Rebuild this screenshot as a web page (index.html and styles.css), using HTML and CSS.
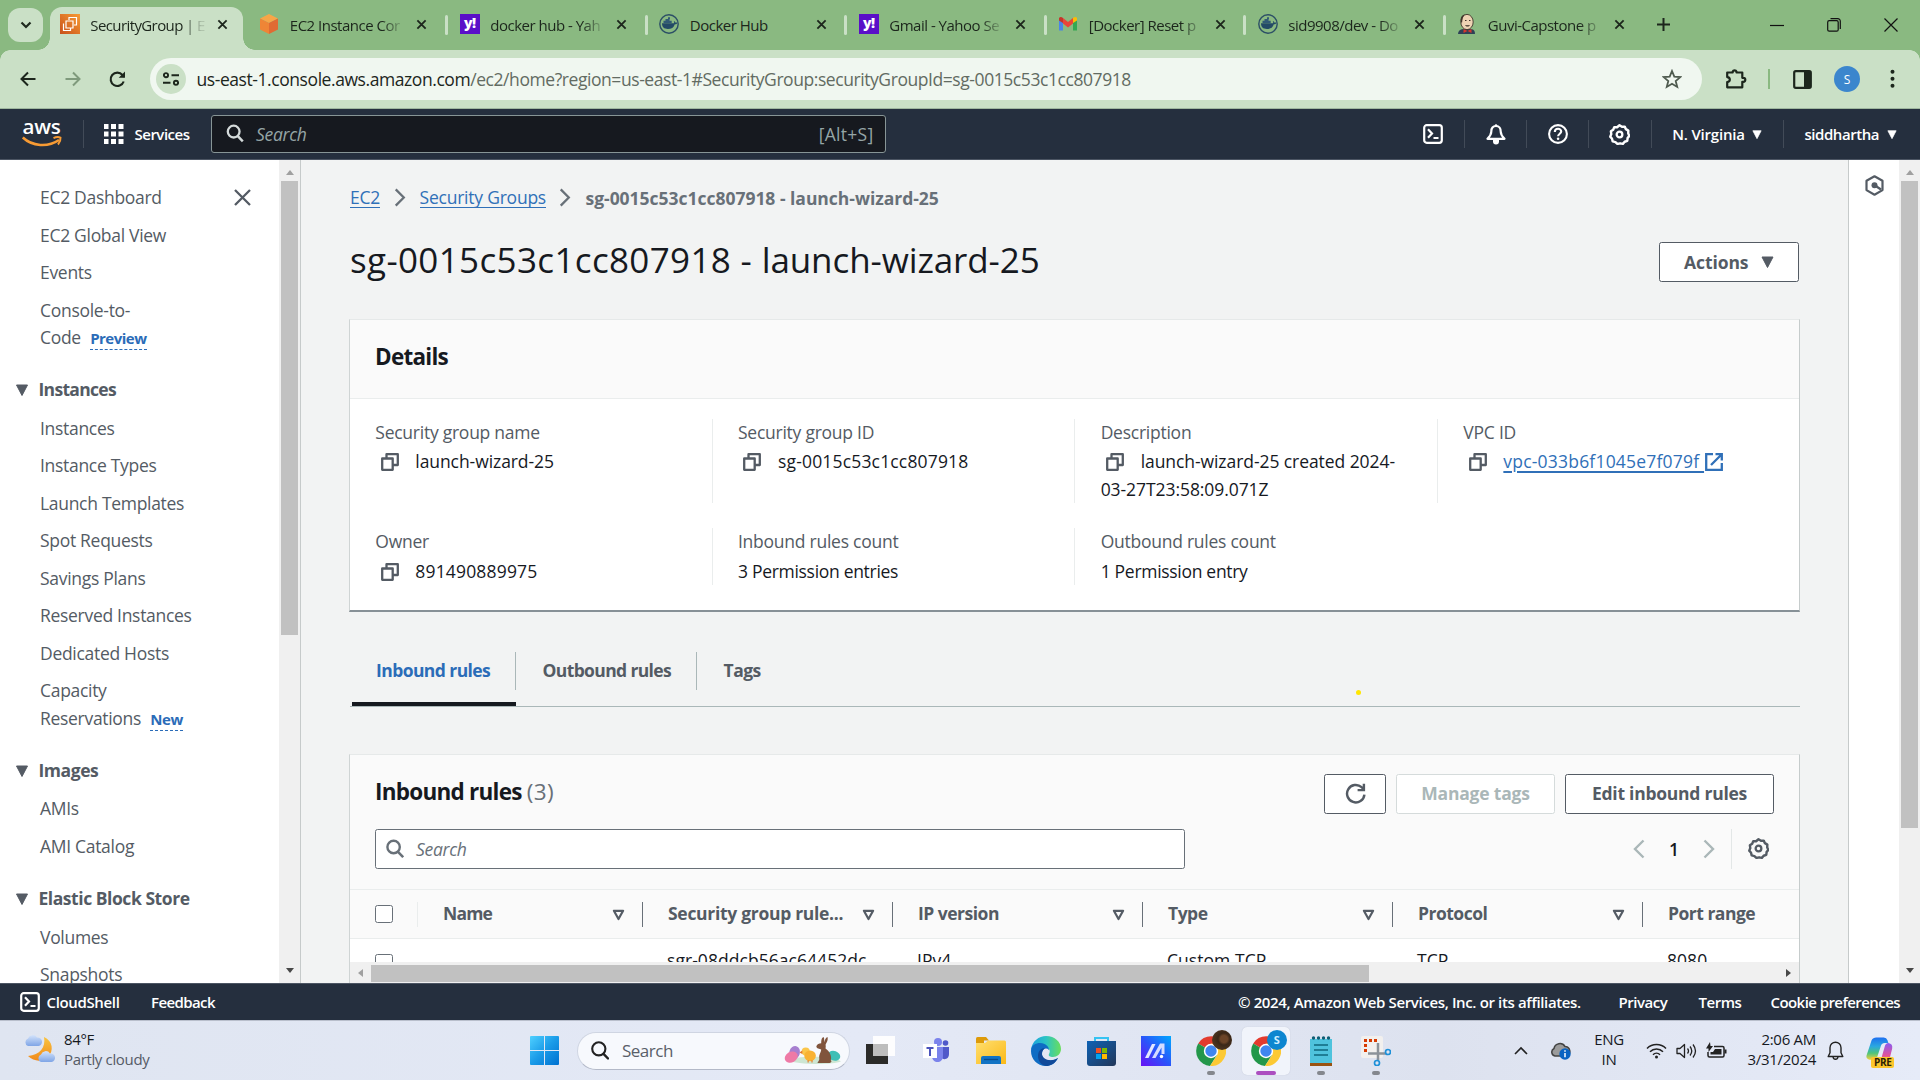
FILE: index.html
```html
<!DOCTYPE html>
<html lang="en">
<head>
<meta charset="utf-8">
<title>SecurityGroup | EC2</title>
<link rel="stylesheet" href="styles.css">
</head>
<body>
<svg class="defs" width="0" height="0">
  <defs>
    <linearGradient id="g-orange" x1="0" y1="1" x2="1" y2="0"><stop offset="0" stop-color="#c8511b"/><stop offset="1" stop-color="#f79b34"/></linearGradient>
    <linearGradient id="g-win" x1="0" y1="0" x2="1" y2="1"><stop offset="0" stop-color="#4fd0ff"/><stop offset=".5" stop-color="#1a9be8"/><stop offset="1" stop-color="#0071d0"/></linearGradient>
    <linearGradient id="g-moon" x1="0" y1="0" x2="0" y2="1"><stop offset="0" stop-color="#f9c440"/><stop offset="1" stop-color="#f08a1c"/></linearGradient>
    <linearGradient id="g-cloud" x1="0" y1="0" x2="0" y2="1"><stop offset="0" stop-color="#d3e3fb"/><stop offset="1" stop-color="#7fa5e6"/></linearGradient>
    <linearGradient id="g-edge" x1="0" y1="0" x2="1" y2="0"><stop offset="0" stop-color="#1aa0e0"/><stop offset=".5" stop-color="#2cc4c4"/><stop offset="1" stop-color="#6ade5c"/></linearGradient>
    <linearGradient id="g-folder" x1="0" y1="0" x2="1" y2="1"><stop offset="0" stop-color="#ffdf70"/><stop offset="1" stop-color="#fbb917"/></linearGradient>
    <linearGradient id="g-store" x1="0" y1="0" x2="1" y2="1"><stop offset="0" stop-color="#0e62b5"/><stop offset="1" stop-color="#233759"/></linearGradient>
    <linearGradient id="g-asus" x1="0" y1="1" x2="1" y2="0"><stop offset="0" stop-color="#6a10f5"/><stop offset=".5" stop-color="#2a55fa"/><stop offset="1" stop-color="#00a8ff"/></linearGradient>
    <linearGradient id="g-cop" x1="0" y1="0" x2="0" y2="1"><stop offset="0" stop-color="#1d6ff0"/><stop offset=".4" stop-color="#2aa8e0"/><stop offset=".7" stop-color="#4ec47a"/><stop offset="1" stop-color="#f5d23c"/></linearGradient>
    <linearGradient id="g-cop2" x1="0" y1="0" x2="0" y2="1"><stop offset="0" stop-color="#8a5cf0"/><stop offset=".6" stop-color="#e0529c"/><stop offset="1" stop-color="#f58a5a"/></linearGradient>
    <symbol id="x" viewBox="0 0 12 12"><path d="M1.5 1.5l9 9M10.5 1.5l-9 9" fill="none" stroke="currentColor" stroke-width="2"/></symbol>
    <symbol id="x-thin" viewBox="0 0 19 19"><path d="M2 2l15 15M17 2L2 17" fill="none" stroke="currentColor" stroke-width="2.300"/></symbol>
    <symbol id="caret" viewBox="0 0 12 12"><path d="M.5 1h11L6 11.5z" fill="currentColor" stroke="currentColor" stroke-linejoin="round"/></symbol>
    <symbol id="sort" viewBox="0 0 12 12"><path d="M1.4 1.8h9.2L6 10z" fill="none" stroke="currentColor" stroke-width="2.200" stroke-linejoin="round"/></symbol>
    <symbol id="mag" viewBox="0 0 18 20"><circle cx="7.6" cy="8" r="6.2" fill="none" stroke="currentColor" stroke-width="2.4"/><path d="M12 12.8l5.2 5.4" stroke="currentColor" stroke-width="2.6"/></symbol>
    <symbol id="copy" viewBox="0 0 18 18"><path d="M1.2 5.5h10.5v11.3H1.2zM5.5 5V1.2h11.3V12H12.5" fill="none" stroke="currentColor" stroke-width="2.3" stroke-linejoin="round"/></symbol>
    <symbol id="chev" viewBox="0 0 12 20"><path d="M1.5 1.5l8.5 8.5-8.5 8.5" fill="none" stroke="currentColor" stroke-width="2.4"/></symbol>
    <symbol id="gear" viewBox="0 0 20 20"><path d="M10 1.2l2.300 1.400 2.700-.1 1.100 2.400 2.300 1.400-.1 2.600 1 2.400-1.600 2.100-.3 2.600-2.500.9-1.700 2-2.600-.5-2.600.6-1.900-1.800-2.600-.6-.6-2.600L1.200 12l1-2.400-.4-2.600 2.200-1.500L5 3l2.700.1z" fill="none" stroke="currentColor" stroke-width="2.300" stroke-linejoin="round"/><circle cx="10" cy="10" r="2.700" fill="none" stroke="currentColor" stroke-width="2.200"/></symbol>
    <symbol id="shell" viewBox="0 0 20 20"><rect x="1.200" y="1.200" width="17.600" height="17.600" rx="2.500" fill="none" stroke="currentColor" stroke-width="2.200"/><path d="M5 5.200l4 4.300-4 4.300M10.500 14h5" fill="none" stroke="currentColor" stroke-width="2.200"/></symbol>
    <symbol id="whale" viewBox="0 0 20 20"><circle cx="10" cy="10" r="9.200" fill="none" stroke="#2c4f66" stroke-width="1.400"/><path d="M3 9.300h12c.3-1 .2-1.700-.2-2.400 1 .3 1.500 1 1.700 1.800.7-.2 1.400-.1 1.900.2-.5 1-1.400 1.400-2.600 1.300C14.700 13.500 12.500 15 8.900 15 5 15 3 13 3 9.300z" fill="#234a66"/><path d="M4.500 6.800h8.200v2.200H4.500zM6.500 4.900h4v2h-4zM9 3.200h2v2H9z" fill="#315a75"/></symbol>
    <symbol id="chrome" viewBox="0 0 30 30"><path d="M15 15L2.200 7.500A15 15 0 0 1 28 7.500z" fill="#e33b2e"/><path d="M15 15L2.200 7.500A15 15 0 0 0 14 30l7-11z" fill="#23974a"/><path d="M15 15l6.500 3.500L14 30A15 15 0 0 0 28 7.500H15z" fill="#fcc934"/><circle cx="15" cy="15" r="7.200" fill="#fff"/><circle cx="15" cy="15" r="5.700" fill="#3f86f0"/></symbol>
  </defs>
</svg>

<div class="screen">
  <header class="tabstrip">
    <div class="tab-search"><svg width="12" height="8" viewBox="0 0 12 8"><path d="M1.500 1.500L6 6l4.500-4.500" fill="none" stroke="#1f2a1f" stroke-width="2.200"/></svg></div>
    <div class="tab active">
      <svg class="fav" viewBox="0 0 20 20"><path d="M0 0h20v20H0z" fill="url(#g-orange)"/><path d="M3.500 9.500v7h7V14M6 7h7v7H6zM9 6V3.500h7.500V11H14" fill="none" stroke="#fff" stroke-width="1.200"/></svg>
      <span class="tab-title">SecurityGroup | E</span><svg class="close"><use href="#x"/></svg></div>
    <div class="tab">
      <svg class="fav" viewBox="0 0 20 20"><path d="M10 0l9 4.500L10 9 1 4.500z" fill="#f7a648"/><path d="M1 4.500L10 9v11l-9-4.500z" fill="#ef8536"/><path d="M19 4.500L10 9v11l9-4.500z" fill="#e06b33"/></svg>
      <span class="tab-title">EC2 Instance Cor</span><svg class="close"><use href="#x"/></svg></div>
    <div class="tab sep"><span class="fav yahoo">y!</span><span class="tab-title">docker hub - Yah</span><svg class="close"><use href="#x"/></svg></div>
    <div class="tab sep"><svg class="fav"><use href="#whale"/></svg><span class="tab-title whole">Docker Hub</span><svg class="close"><use href="#x"/></svg></div>
    <div class="tab sep"><span class="fav yahoo">y!</span><span class="tab-title">Gmail - Yahoo Se</span><svg class="close"><use href="#x"/></svg></div>
    <div class="tab sep">
      <svg class="fav" viewBox="0 0 20 20"><path d="M1 4v12.500h4V8z" fill="#4a86e8"/><path d="M19 4v12.500h-4V8z" fill="#34a853"/><path d="M1 4c1-1.500 2.500-1.500 4 0v5L1 6.500z" fill="#c5352b"/><path d="M5 4l5 4 5-4v5.500L10 13.500 5 9.500z" fill="#e9453a"/><path d="M19 4c-1-1.500-2.500-1.500-4 0v5l4-2.500z" fill="#fbbc05"/></svg>
      <span class="tab-title">[Docker] Reset p</span><svg class="close"><use href="#x"/></svg></div>
    <div class="tab sep"><svg class="fav"><use href="#whale"/></svg><span class="tab-title">sid9908/dev - Do</span><svg class="close"><use href="#x"/></svg></div>
    <div class="tab sep">
      <svg class="fav" viewBox="0 0 20 20"><path d="M1 20c0-3 2-4.500 5-5h8c3 .5 4 2 4 5z" fill="#2f4257"/><ellipse cx="10" cy="8" rx="6.200" ry="7.600" fill="#eed3b4" stroke="#41352b" stroke-width=".9"/><path d="M4 8c-1-4 .5-7 4-7.500C6 2 5.500 5 5 9z" fill="#41352b"/><path d="M8 6.500h1.500M12 6.500h1.500M8.500 11.500c1 .8 3 .8 4 0" stroke="#41352b" stroke-width="1"/><path d="M10.500 17l-4-2v4zM10.500 17l4-2v4z" fill="#d8362d"/></svg>
      <span class="tab-title">Guvi-Capstone p</span><svg class="close"><use href="#x"/></svg></div>
    <div class="new-tab"><svg width="13" height="13" viewBox="0 0 13 13"><path d="M6.500 0v13M0 6.500h13" stroke="#1c261c" stroke-width="2"/></svg></div>
    <div class="win-controls">
      <svg width="14" height="14" viewBox="0 0 14 14"><path d="M0 7.500h14" stroke="#111" stroke-width="1.200"/></svg>
      <svg width="14" height="14" viewBox="0 0 14 14"><path d="M3.500.7h7.300A2.500 2.500 0 0 1 13.300 3.200V11" fill="none" stroke="#111" stroke-width="1.200"/><rect x=".7" y="2.700" width="10.500" height="10.500" rx="1.500" fill="none" stroke="#111" stroke-width="1.200"/></svg>
      <svg width="14" height="14" viewBox="0 0 14 14"><path d="M.5.5l13 13M13.500.5l-13 13" stroke="#111" stroke-width="1.200"/></svg>
    </div>
  </header>

  <div class="toolbar">
    <div class="nav-btn"><svg width="16" height="16" viewBox="0 0 16 16"><path d="M15.500 8H1.800M8 1.500L1.500 8 8 14.500" fill="none" stroke="#1c261c" stroke-width="2"/></svg></div>
    <div class="nav-btn"><svg width="16" height="16" viewBox="0 0 16 16"><path d="M.5 8h13.700M8 1.500L14.500 8 8 14.500" fill="none" stroke="#7f9a7c" stroke-width="2"/></svg></div>
    <div class="nav-btn"><svg width="17" height="17" viewBox="0 0 17 17"><path d="M14.700 10.500A6.700 6.700 0 1 1 13.500 4l1.500 1.800" fill="none" stroke="#1c261c" stroke-width="2.100"/><path d="M16 .5v6.300H9.700z" fill="#1c261c"/></svg></div>
    <div class="omnibox">
      <div class="site-info"><svg width="16" height="14" viewBox="0 0 16 14"><path d="M8.500 3.200H16M0 10.800h7.500" stroke="#1c261c" stroke-width="2"/><circle cx="3" cy="3.200" r="2.100" fill="none" stroke="#1c261c" stroke-width="1.900"/><circle cx="13" cy="10.800" r="2.100" fill="none" stroke="#1c261c" stroke-width="1.900"/></svg></div>
      <span class="url">us-east-1.console.aws.amazon.com<span class="url-path">/ec2/home?region=us-east-1#SecurityGroup:securityGroupId=sg-0015c53c1cc807918</span></span>
      <svg class="star" width="20" height="20" viewBox="0 0 20 20"><path d="M10 2l2.300 5.600 6 .5-4.600 3.900 1.500 5.900L10 14.700l-5.200 3.200L6.300 12 1.700 8.100l6-.5z" fill="none" stroke="#4f5b4f" stroke-width="1.800"/></svg>
    </div>
    <div class="tool-icons">
      <svg width="22" height="24" viewBox="0 0 22 22"><path d="M2.200 4.500h5.500V3.700a2 2 0 0 1 3.800 0v.8h5.800v5.300h1a2 2 0 0 1 0 4h-1v5.500H2.200v-5.200c3.500-.3 3.500-4.700 0-5z" fill="none" stroke="#1c261c" stroke-width="2.200" stroke-linejoin="round"/></svg>
      <span class="tool-sep"></span>
      <svg width="19" height="19" viewBox="0 0 19 19"><rect x="1.200" y="1.200" width="16.600" height="16.600" rx="1.500" fill="none" stroke="#1c261c" stroke-width="2.200"/><path d="M11 1h7v17h-7z" fill="#1c261c"/></svg>
      <span class="avatar">S</span>
      <svg width="5" height="20" viewBox="0 0 5 20"><g fill="#1c261c"><circle cx="2.500" cy="2.700" r="2"/><circle cx="2.500" cy="9.700" r="2"/><circle cx="2.500" cy="16.700" r="2"/></g></svg>
    </div>
  </div>

  <div class="aws-nav">
    <svg class="aws-logo" width="40" height="28" viewBox="0 0 40 28"><text x="0.500" y="13.500" textLength="38" lengthAdjust="spacingAndGlyphs" class="aws-word">aws</text><path d="M.8 17.500C10 26.500 26 27.500 37 20" fill="none" stroke="#f79b34" stroke-width="2.600"/><path d="M31.500 18.200c3-1.500 5.500-1.200 7-.6.200 2-.6 4.700-2.500 6.900" fill="none" stroke="#f79b34" stroke-width="2"/></svg>
    <svg class="grid-ico" width="20" height="20" viewBox="0 0 20 20"><g fill="#fff"><path d="M0 0h5v5H0zM7.500 0h5v5h-5zM15 0h5v5h-5zM0 7.500h5v5H0zM7.500 7.500h5v5h-5zM15 7.500h5v5h-5zM0 15h5v5H0zM7.500 15h5v5h-5zM15 15h5v5h-5z"/></g></svg>
    <span class="services">Services</span>
    <div class="aws-search"><svg width="18" height="19"><use href="#mag"/></svg><span class="ph">Search</span><span class="kbd">[Alt+S]</span></div>
    <div class="aws-right">
      <div class="cell w62"><svg width="20" height="20"><use href="#shell"/></svg></div>
      <div class="cell w62"><svg width="20" height="21" viewBox="0 0 20 21"><path d="M10 2c-3.300 0-4.700 2.500-4.700 5.500 0 3.500-1.500 5-3.800 7.300h17c-2.300-2.300-3.800-3.800-3.800-7.300 0-3-1.400-5.500-4.700-5.500z" fill="none" stroke="#fff" stroke-width="2.200" stroke-linejoin="round"/><path d="M7 16v1.500a3 3 0 0 0 6 0V16z" fill="#fff"/><circle cx="10" cy="1.500" r="1.300" fill="#fff"/></svg></div>
      <div class="cell w62"><svg width="20" height="20" viewBox="0 0 20 20"><circle cx="10" cy="10" r="8.900" fill="none" stroke="#fff" stroke-width="2.100"/><path d="M6.800 8c0-4.200 6.400-4.200 6.400-.4 0 2.100-3.100 2.300-3.100 4.700" fill="none" stroke="#fff" stroke-width="2.100"/><circle cx="10.100" cy="14.800" r="1.300" fill="#fff"/></svg></div>
      <div class="cell w62"><svg width="21" height="21"><use href="#gear"/></svg></div>
      <div class="cell region"><span>N. Virginia</span><svg width="10" height="9"><use href="#caret"/></svg></div>
      <div class="cell user"><span>siddhartha</span><svg width="10" height="9"><use href="#caret"/></svg></div>
    </div>
  </div>

  <div class="main">
    <nav class="sidebar">
      <div class="side-list">
        <a class="item top">EC2 Dashboard<svg class="side-close"><use href="#x-thin"/></svg></a>
        <a class="item">EC2 Global View</a>
        <a class="item">Events</a>
        <a class="item">Console-to-<br>Code <span class="badge">Preview</span></a>
        <div class="group"><svg><use href="#caret"/></svg>Instances</div>
        <a class="item">Instances</a>
        <a class="item">Instance Types</a>
        <a class="item">Launch Templates</a>
        <a class="item">Spot Requests</a>
        <a class="item">Savings Plans</a>
        <a class="item">Reserved Instances</a>
        <a class="item">Dedicated Hosts</a>
        <a class="item">Capacity<br>Reservations <span class="badge">New</span></a>
        <div class="group"><svg><use href="#caret"/></svg>Images</div>
        <a class="item">AMIs</a>
        <a class="item">AMI Catalog</a>
        <div class="group"><svg><use href="#caret"/></svg>Elastic Block Store</div>
        <a class="item">Volumes</a>
        <a class="item">Snapshots</a>
      </div>
      <div class="vbar"><i class="up"></i><b class="thumb side-thumb"></b><i class="down"></i></div>
    </nav>

    <main class="content">
      <div class="crumbs"><a class="link">EC2</a><svg><use href="#chev"/></svg><a class="link">Security Groups</a><svg><use href="#chev"/></svg><span class="here">sg-0015c53c1cc807918 - launch-wizard-25</span></div>
      <div class="title-row"><h1>sg-0015c53c1cc807918 - <span>launch-wizard-25</span></h1><div class="btn actions">Actions<svg width="13" height="12"><use href="#caret"/></svg></div></div>

      <section class="card details">
        <h2 class="card-head">Details</h2>
        <div class="kv">
          <div><label>Security group name</label><p><svg class="copy"><use href="#copy"/></svg>launch-wizard-25</p></div>
          <div><label>Security group ID</label><p class="mono"><svg class="copy"><use href="#copy"/></svg>sg-0015c53c1cc807918</p></div>
          <div><label>Description</label><p><svg class="copy"><use href="#copy"/></svg>launch-wizard-25 created 2024-<br>03-27T23:58:09.071Z</p></div>
          <div><label>VPC ID</label><p class="vpc"><svg class="copy"><use href="#copy"/></svg><a>vpc-033b6f1045e7f079f </a><svg class="ext" viewBox="0 0 18 18"><path d="M8 1.200H1.200v15.600h15.600V10M10.500 1.200h6.300V7.500M16.500 1.500L6 12" fill="none" stroke="#3070b8" stroke-width="2.300"/></svg></p></div>
          <div><label>Owner</label><p class="mono"><svg class="copy"><use href="#copy"/></svg>891490889975</p></div>
          <div><label>Inbound rules count</label><p class="plain">3 Permission entries</p></div>
          <div class="last"><label>Outbound rules count</label><p class="plain">1 Permission entry</p></div>
        </div>
      </section>

      <div class="tabs"><div class="t on"><span>Inbound rules</span></div><div class="t t2"><span>Outbound rules</span></div><div class="t t3"><span>Tags</span></div><i class="dot"></i></div>

      <section class="card rules">
        <div class="rules-top">
          <h2>Inbound rules <span>(3)</span></h2>
          <div class="btns">
            <div class="btn refresh"><svg width="21" height="21" viewBox="0 0 20 20"><path d="M18.500 11A8.300 8.300 0 1 1 15.800 4L18 6.200" fill="none" stroke="#545b64" stroke-width="2.300"/><path d="M18 .8v6h-6" fill="none" stroke="#545b64" stroke-width="2.300"/></svg></div>
            <div class="btn off manage">Manage tags</div>
            <div class="btn edit">Edit inbound rules</div>
          </div>
        </div>
        <div class="filter-row">
          <div class="filter"><svg width="18" height="20"><use href="#mag"/></svg><span>Search</span></div>
          <div class="pager"><svg class="flip" width="12" height="20"><use href="#chev"/></svg><b>1</b><svg width="12" height="20"><use href="#chev"/></svg></div>
          <div class="prefs"><svg width="21" height="21"><use href="#gear"/></svg></div>
        </div>
        <div class="grid thead">
          <div class="chk"><i></i></div>
          <div>Name<svg><use href="#sort"/></svg></div>
          <div>Security group rule...<svg><use href="#sort"/></svg></div>
          <div>IP version<svg><use href="#sort"/></svg></div>
          <div>Type<svg><use href="#sort"/></svg></div>
          <div>Protocol<svg><use href="#sort"/></svg></div>
          <div>Port range</div>
        </div>
        <div class="grid trow">
          <div class="chk"><i></i></div><div></div><div>sgr-08ddcb56ac64452dc</div><div>IPv4</div><div>Custom TCP</div><div>TCP</div><div>8080</div>
        </div>
        <div class="hbar"><i class="left"></i><b></b><i class="right"></i></div>
      </section>
    </main>

    <aside class="help"><svg width="19" height="21" viewBox="0 0 19 21"><path d="M9.500 1.300l8 4.500v9.300l-8 4.600-8-4.600V5.800z" fill="none" stroke="#545b64" stroke-width="2.200" stroke-linejoin="round"/><circle cx="9.500" cy="10.300" r="3" fill="#545b64"/><path d="M10 10.500l6 4" stroke="#545b64" stroke-width="2.200"/></svg></aside>
    <div class="vbar page-bar"><i class="up"></i><b class="thumb page-thumb"></b><i class="down"></i></div>
  </div>

  <footer class="aws-foot">
    <svg width="20" height="20"><use href="#shell"/></svg><span class="cs">CloudShell</span><span class="fb">Feedback</span>
    <span class="copyr">© 2024, Amazon Web Services, Inc. or its affiliates.</span><span class="pr">Privacy</span><span class="te">Terms</span><span class="ck">Cookie preferences</span>
  </footer>

  <div class="taskbar">
    <div class="weather">
      <svg width="32" height="30" viewBox="0 0 32 30"><path d="M20 3c9 4 10 14 4 20-5 5-14 5-20-1 12-1 18-9 16-19z" fill="url(#g-moon)"/><path d="M4 12a4 4 0 0 1 0-7.500A5 5 0 0 1 13 3.500a4.300 4.300 0 0 1 1.500 8.500z" fill="url(#g-cloud)"/><path d="M17 28a4 4 0 0 1 0-7.500 5 5 0 0 1 9-1 4.300 4.300 0 0 1 1.500 8.500z" fill="url(#g-cloud)"/></svg>
      <div class="wtext"><div class="deg">84°F</div><div class="cond">Partly cloudy</div></div>
    </div>
    <div class="slot"><svg width="29" height="29" viewBox="0 0 29 29"><path d="M0 1a1 1 0 0 1 1-1h13v14H0zM15 0h13a1 1 0 0 1 1 1v13H15zM0 15h14v14H1a1 1 0 0 1-1-1zM15 15h14v13a1 1 0 0 1-1 1H15z" fill="url(#g-win)"/></svg></div>
    <div class="tsearch">
      <svg width="18" height="19" viewBox="0 0 18 19"><circle cx="7.800" cy="7.800" r="6.600" fill="none" stroke="#222" stroke-width="2.100"/><path d="M12.500 12.800l4.500 4.700" stroke="#222" stroke-width="2.400" stroke-linecap="round"/></svg><span>Search</span>
      <svg class="easter" width="58" height="29" viewBox="0 0 60 30"><path d="M5 25c8-5 45-5 55 1-8 4-45 4-55-1z" fill="#cde6d3"/><ellipse cx="12" cy="17" rx="5.500" ry="7" fill="#a77fd0" transform="rotate(15 11 17)"/><ellipse cx="8" cy="22" rx="7" ry="5.500" fill="#ee7aa6" transform="rotate(-30 8 21)"/><circle cx="23.500" cy="16" r="4.200" fill="#fbc64b"/><ellipse cx="28" cy="20.500" rx="6" ry="5.500" fill="#f9b233"/><path d="M20 15l-3 2 3 1.500z" fill="#e5762b"/><path d="M26 25v2.500M30 25v2.500" stroke="#e5762b" stroke-width="1.200"/><ellipse cx="53" cy="20.500" rx="6.500" ry="5" fill="#3fbfb6" transform="rotate(20 53 20)"/><path d="M36 28c-1-1 2-2 1.500-5-.5-4 2-6 2-9-1.500-1-5-1-5-3.500.5-2 3-3 5-3C39.500 4 40 1.500 42 1c1 1.500.5 4 .5 5.500C43.500 4 44 1.500 46 1c1 3-1 6-2 8 .5 2 0 3 0 4 4.500 3 6.500 8 5.500 12 1.500 1 0 3-2 3z" fill="#80543c"/></svg>
    </div>
    <div class="apps">
      <div class="slot"><svg width="30" height="29" viewBox="0 0 30 29"><path d="M0 8h22v20H0z" fill="#2b2b29"/><path d="M7 0h22v20H7z" fill="#fff" opacity=".9"/><path d="M7 8h15v12H7z" fill="#bdbdbd"/></svg></div>
      <div class="slot"><svg width="27" height="26" viewBox="0 0 27 26"><circle cx="15" cy="4" r="4" fill="#7b83eb"/><circle cx="22.500" cy="5" r="2.800" fill="#5059c9"/><path d="M16 9h10v7c0 6-7 7-8 2z" fill="#5059c9"/><path d="M9 9h11v9c0 8-11 8-11 0z" fill="#7b83eb"/><path d="M0 6h14v14H0z" fill="#fff"/><path d="M3.500 9h7v2H8v7H6v-7H3.500z" fill="#4b53bc"/></svg></div>
      <div class="slot"><svg width="30" height="28" viewBox="0 0 30 28"><path d="M0 1.500Q0 0 1.500 0H10l3 3.500H0z" fill="#dd9a09"/><path d="M0 2h8v4H0z" fill="#dd9a09"/><path d="M0 6h9l3-2.500h16.500q1.500 0 1.500 1.500v22H0z" fill="url(#g-folder)"/><path d="M5 27v-6q0-2 2-2h16q2 0 2 2v6z" fill="#1273c4"/><path d="M8 22.500h14" stroke="#0a4c8c" stroke-width="1.300"/></svg></div>
      <div class="slot"><svg width="30" height="30" viewBox="0 0 30 30"><path d="M0 14C1 5 8 0 15 0c9 0 15 6 15 13 0 5-4 8-8 8-3 0-5-1-4-3 2-3 0-7-4-7-5-1-11-2-14 3z" fill="url(#g-edge)"/><path d="M0 15c0-6 5-8 9-8 6 0 9 4 9 7-3-3-7-1-7 4 0 6 7 9 16 4-3 6-8 8-12 8C6 30 0 23 0 15z" fill="#0f6cc4"/><path d="M7 20c0-5 3-8 7-8-4 3-4 7-1 10 4 3 9 3 14 0-3 6-8 8-12 8-5-1-8-5-8-10z" fill="#114a9a"/></svg></div>
      <div class="slot"><svg width="29" height="30" viewBox="0 0 29 30"><path d="M8 6V2h13v4" fill="none" stroke="#36c3f2" stroke-width="2"/><path d="M0 5h29v22q0 3-3 3H3q-3 0-3-3z" fill="url(#g-store)"/><path d="M9 12h5v5H9z" fill="#f25022"/><path d="M15 12h5v5h-5z" fill="#7fba00"/><path d="M9 18h5v5H9z" fill="#00a4ef"/><path d="M15 18h5v5h-5z" fill="#ffb900"/></svg></div>
      <div class="slot"><svg width="30" height="30" viewBox="0 0 30 30"><path d="M0 0h30v30H0z" fill="url(#g-asus)"/><path d="M4 22L11 8h3.500L7.500 22z" fill="#e3e8ff"/><path d="M11 22L19 7.500h4.500V18h-3v-6.500L14.500 22z" fill="#d5dcff"/><circle cx="20.500" cy="20.500" r="1.700" fill="#fff"/></svg></div>
      <div class="slot run"><svg width="30" height="30"><use href="#chrome"/></svg><i class="pic face"></i></div>
      <div class="slot run on"><svg width="30" height="30"><use href="#chrome"/></svg><i class="pic">S</i></div>
      <div class="slot run"><svg width="22" height="30" viewBox="0 0 22 30"><path d="M0 27h22v3H0z" fill="#9a5312"/><path d="M0 3h22v24H0z" fill="#4fc3dd"/><path d="M4 9h14M4 14h14M4 19h14" stroke="#11687d" stroke-width="1.700"/><g fill="#0f5e75"><circle cx="3.500" cy="2" r="1.700"/><circle cx="8.500" cy="2" r="1.700"/><circle cx="13.500" cy="2" r="1.700"/><circle cx="18.500" cy="2" r="1.700"/></g></svg></div>
      <div class="slot run"><svg width="30" height="30" viewBox="0 0 30 30"><rect width="22" height="22" rx="2" fill="#f2f0ee"/><path d="M4.500 16V4.500H16" fill="none" stroke="#d83b01" stroke-width="3" stroke-dasharray="3 2"/><path d="M17 7v17M7 17.500h18" stroke="#8c9299" stroke-width="2.500"/><circle cx="27" cy="16" r="2.500" fill="none" stroke="#1e90d8" stroke-width="1.700"/><circle cx="16" cy="27" r="2.500" fill="none" stroke="#1e90d8" stroke-width="1.700"/></svg></div>
    </div>
    <div class="tray">
      <div><svg width="14" height="9" viewBox="0 0 14 9"><path d="M1 8l6-6 6 6" fill="none" stroke="#222" stroke-width="1.600"/></svg></div>
      <div><svg width="20" height="18" viewBox="0 0 20 18"><path d="M4 14a4 4 0 0 1-1-7.500 6 6 0 0 1 11-2A5 5 0 0 1 16 14z" fill="#9b9b9b" stroke="#444" stroke-width="1.500"/><circle cx="14" cy="12" r="5.700" fill="#0a63c2"/><path d="M14 11v4.200M14 8.300v1.500" stroke="#fff" stroke-width="1.500"/></svg></div>
      <div class="lang">ENG<br>IN</div>
      <div><svg width="21" height="17" viewBox="0 0 21 17"><path d="M1 6.500a13.500 13.500 0 0 1 19 0M4 9.700a9 9 0 0 1 13 0M7 12.700a5 5 0 0 1 7 0" fill="none" stroke="#222" stroke-width="1.500"/><circle cx="10.500" cy="15" r="1.500" fill="#222"/></svg></div>
      <div><svg width="21" height="16" viewBox="0 0 21 16"><path d="M1 5.500h3L8.500 1.500v13L4 10.500H1z" fill="none" stroke="#222" stroke-width="1.300" stroke-linejoin="round"/><path d="M11.500 5.500q2 2.500 0 5M14 3.500q3.500 4.500 0 9M17 1.500q5 6.500 0 13" fill="none" stroke="#222" stroke-width="1.300"/></svg></div>
      <div><svg width="21" height="17" viewBox="0 0 21 17"><path d="M8 4.500h8.500q1.500 0 1.500 1.500v7.500q0 1.500-1.500 1.500h-13Q2 15 2 13.500V10" fill="none" stroke="#222" stroke-width="1.500"/><path d="M9 7h6.500v5.500h-11V10H7z" fill="#222"/><path d="M18.500 7.500h2v4h-2zM4 0L0 6.500h2.500V10L7 4H4.500z" fill="#222"/></svg></div>
      <div class="clock">2:06 AM<br>3/31/2024</div>
      <div><svg width="17" height="20" viewBox="0 0 17 20"><path d="M8.500 1.200a5.500 5.500 0 0 0-5.500 5.500v5L1.200 15.500h14.600L14 11.700v-5a5.500 5.500 0 0 0-5.500-5.500zM6 16c.5 3 4.500 3 5 0" fill="none" stroke="#222" stroke-width="1.400" stroke-linejoin="round"/></svg></div>
      <div class="copilot"><svg width="28" height="27" viewBox="0 0 30 28"><path d="M6 3Q7.500 0 11 0h8q3 0 4 3l1 3h-4q-3 0-4 3l-4 12q-1 3-4 3H4Q-1 23 1 18z" fill="url(#g-cop)"/><path d="M24 6q5 1 4 6l-3 12q-1 4-5 4h-8q3 0 4-4l4-14q1-4 4-4z" fill="url(#g-cop2)"/></svg><span>PRE</span></div>
    </div>
  </div>
</div>
</body>
</html>
```
FILE: styles.css
```css
* { box-sizing: border-box; }
html, body { margin: 0; height: 100%; overflow: hidden; }
body { font-family: "Open Sans", "Noto Sans", sans-serif; color: #16191f; font-size: 17.5px; letter-spacing: -.25px; }
svg { display: block; flex: none; }
.defs { position: absolute; }
h1, h2, p { margin: 0; }
.screen { width: 1920px; height: 1080px; display: flex; flex-direction: column; overflow: hidden; }

/* browser tabs */
.tabstrip { height: 50px; flex: none; background: #8ab981; display: flex; padding: 7px 0 0 8px; font-size: 15px; letter-spacing: -.5px; color: #1c261c; }
.tab-search { width: 35px; height: 34px; margin: 1px 4.3px 0 0; border-radius: 12px; background: #cae0c6; display: grid; place-items: center; }
.tab { width: 199.5px; height: 43px; display: flex; align-items: center; padding: 0 17px 8px 12.5px; position: relative; flex: none; }
.tab.sep { padding-left: 13.5px; }
.tab .fav { width: 20px; height: 20px; margin-top: -1px; flex: none; }
.tab-title { margin-left: 10.5px; width: 115px; flex: none; white-space: nowrap; line-height: 24px; mask-image: linear-gradient(90deg, #000 80%, rgba(0,0,0,.15) 97%); }
.tab-title.whole { mask-image: none; }
.close { width: 11px; height: 11px; margin-left: auto; margin-right: 2px; }
.tab.sep .close { margin-right: 1.5px; }
.tab.sep::before { content: ""; position: absolute; left: -1px; top: 8px; width: 3px; height: 20px; border-radius: 2px; background: #cae0c6; }
.tab.active { letter-spacing: -.6px; }
.tab.active::before { content: ""; position: absolute; inset: 0 4px 0 3px; border-radius: 12px 12px 0 0; background: #cae0c6; }
.tab.active::after { content: ""; position: absolute; left: -9px; right: -8px; bottom: 0; height: 12px; background: radial-gradient(circle at 0 0, transparent 11.5px, #cae0c6 12px) left / 12px 12px no-repeat, radial-gradient(circle at 100% 0, transparent 11.5px, #cae0c6 12px) right / 12px 12px no-repeat; }
.tab.active > * { position: relative; }
.yahoo { background: #5a0fc8; color: #fff; font-weight: 800; font-size: 14px; line-height: 17px; text-align: center; letter-spacing: -.5px; }
.new-tab { margin: 11px 0 0 14px; }
.win-controls { margin-left: auto; display: flex; gap: 43px; padding: 11px 22px 0 0; }

/* address bar */
.toolbar { height: 59px; flex: none; background: linear-gradient(#cae0c6, #cae0c6) 0 0 / 100% 58px no-repeat, #9fb79f; display: flex; align-items: center; padding: 0 0 1px 5px; position: relative; }
.toolbar::before, .toolbar::after { content: ""; position: absolute; top: 0; width: 10px; height: 10px; }
.toolbar::before { left: 0; background: radial-gradient(circle at 100% 100%, transparent 9.5px, #8ab981 10px); }
.toolbar::after { right: 0; background: radial-gradient(circle at 0 100%, transparent 9.5px, #8ab981 10px); }
.nav-btn { width: 45px; display: grid; place-items: center; }
.omnibox { width: 1552px; height: 42px; margin-left: 10px; border-radius: 21px; background: #f0f7f0; display: flex; align-items: center; padding: 0 20px 0 6px; }
.site-info { width: 30px; height: 30px; border-radius: 50%; background: #cae0c6; display: grid; place-items: center; }
.url { margin-left: 10.5px; letter-spacing: -.43px; color: #1c261c; white-space: nowrap; }
.url-path { color: #626b62; }
.star { margin-left: auto; }
.tool-icons { flex: 1; display: flex; align-items: center; padding-left: 23px; }
.tool-sep { width: 2px; height: 20px; background: #8ab981; margin: 0 23px 0 20.5px; }
.avatar { width: 26px; height: 26px; border-radius: 50%; background: #3b86cd; color: #fff; font-size: 12px; display: grid; place-items: center; margin: 0 30px 0 22.5px; }

/* console header */
.aws-nav { height: 51px; flex: none; background: #252f3e; border-bottom: 1px solid #4c5563; display: flex; align-items: center; color: #fff; font-size: 15px; font-weight: 600; padding-left: 22px; }
.aws-word { font: 600 20px "Open Sans", sans-serif; fill: #fff; }
.grid-ico { box-sizing: content-box; margin-left: 21px; border-left: 1.5px solid #424b58; padding: 4px 0 4px 19.5px; }
.services { margin-left: 11px; width: 76px; letter-spacing: -.5px; }
.aws-search { width: 675px; height: 38.5px; border: 1px solid #879596; border-radius: 3px; background: #16191f; display: flex; align-items: center; padding: 0 11px 1px 14px; font-size: 17.5px; font-weight: 400; color: #95a5a6; }
.aws-search svg { color: #d5dbdb; }
.ph { font-style: italic; margin-left: 12.5px; letter-spacing: -.3px; }
.kbd { margin-left: auto; letter-spacing: .3px; }
.aws-right { margin-left: auto; display: flex; align-items: center; }
.cell { height: 28px; display: flex; align-items: center; justify-content: center; border-left: 1.5px solid #424b58; }
.cell:first-child { border: 0; }
.w62 { width: 62.2px; }
.region { width: 132.5px; gap: 7.5px; letter-spacing: -.2px; padding: 0; }
.user { width: 137px; gap: 8px; letter-spacing: -.45px; justify-content: flex-start; padding-left: 20.5px; }

/* page body */
.main { flex: 1; min-height: 0; display: flex; background: #f2f3f3; }
.sidebar { width: 301px; background: #fff; border-right: 1.5px solid #c6caca; display: flex; flex: none; overflow: hidden; }
.side-list { width: 279px; padding: 24px 0 0 40px; color: #545b64; letter-spacing: -.3px; overflow: hidden; }
.item { display: block; line-height: 27.5px; margin-bottom: 10.05px; }
.item.top { display: flex; justify-content: space-between; align-items: center; padding-right: 27px; }
.side-close { width: 19px; height: 19px; }
.badge { color: #2b6cb8; font-weight: 700; font-size: 15px; letter-spacing: -.5px; border-bottom: 1.5px dashed #2b6cb8; margin-left: 5px; line-height: 22px; display: inline-block; }
.group { display: flex; align-items: center; line-height: 27.5px; font-weight: 700; margin: 24.5px 0 11px -24px; letter-spacing: -.45px; }
.group:nth-of-type(1) { letter-spacing: -.7px; }
.group svg { width: 12px; height: 12px; margin-right: 10.5px; }
.vbar { width: 21px; background: #f0f0f0; display: flex; flex-direction: column; align-items: center; height: 100%; padding: 10px 0; }
.up, .down { border: 4.5px solid transparent; border-top: 0; border-bottom: 5px solid #a0a0a0; flex: none; }
.down { border-bottom: 0; border-top: 5.5px solid #484848; margin-top: auto; }
.thumb { width: 17px; background: #c1c1c1; margin-top: 6px; }
.side-thumb { height: 454px; }
.page-thumb { height: 647px; }
.help { width: 51px; background: #fff; border-left: 1px solid #c6caca; padding: 15px 0 0 15.5px; flex: none; }
.content { flex: 1; min-width: 0; padding: 0 0 0 49px; display: flex; flex-direction: column; }

.crumbs { height: 27.5px; margin-top: 24px; display: flex; align-items: center; flex: none; }
.crumbs svg { width: 12px; height: 19px; margin: 0 14px 0 13.5px; color: #687078; }
.crumbs .link { color: #3070b8; border-bottom: 1.5px solid #3070b8; line-height: 20px; letter-spacing: -.23px; }
.here { font-weight: 700; color: #687078; letter-spacing: -.02px; }
.title-row { display: flex; justify-content: space-between; align-items: center; height: 40px; margin-top: 30.5px; flex: none; width: 1449px; }
h1 { font-size: 35px; font-weight: 400; line-height: 44px; letter-spacing: .35px; padding-bottom: 4px; }
h1 span { letter-spacing: -.1px; }
.btn { background: #fff; border: 1.5px solid #545b64; border-radius: 2.5px; color: #545b64; font-weight: 700; height: 40px; display: flex; align-items: center; justify-content: center; padding-bottom: 1px; white-space: nowrap; }
.actions { width: 140px; gap: 12.5px; letter-spacing: -.1px; }

.card { background: #fff; border: 1px solid #e6e9e9; border-left-color: #cfd4d4; border-right-color: #c6cccc; flex: none; width: 1451px; margin-left: -1px; }
.details { margin-top: 37px; height: 293px; border-bottom: 2px solid #879096; }
h2 { font-size: 22.5px; font-weight: 700; letter-spacing: -.75px; }
.card-head { height: 78.5px; background: #fafafa; border-bottom: 1px solid #eaeded; padding: 19px 25px; line-height: 36px; }
.kv { display: grid; grid-template-columns: repeat(4, 362.7px); gap: 25px 0; padding: 20px 0 0; line-height: 27.5px; }
.kv > div { padding-left: 25.3px; border-right: 1.5px solid #eaeded; position: relative; }
.kv > div:nth-child(4), .kv > .last { border: 0; }
.kv label { display: block; color: #545b64; margin-bottom: 2px; }
.kv p { white-space: nowrap; letter-spacing: -.07px; }
.kv .mono { letter-spacing: .17px; }
.kv .plain { letter-spacing: -.3px; }
.copy { display: inline-block; width: 18px; height: 18px; margin: -6px 16.5px -3px 5.5px; vertical-align: 0; color: #545b64; }
.vpc a { color: #3070b8; text-decoration: underline; text-decoration-thickness: 1.5px; text-underline-offset: 3px; white-space: pre; letter-spacing: .2px; }
.kv .ext { display: inline-block; width: 18px; height: 18px; margin: -6px 0 -3px 1px; vertical-align: 0; }

.tabs { height: 55px; margin-top: 40px; display: flex; border-bottom: 1.5px solid #aab7b8; font-weight: 700; color: #545b64; position: relative; flex: none; width: 1450px; }
.t { height: 54px; }
.t span { display: block; height: 38px; line-height: 36px; white-space: nowrap; }
.t.on { width: 164px; margin-left: 2px; color: #2b6cb8; border-bottom: 4px solid #16191f; letter-spacing: -.57px; }
.on span { padding-left: 24px; border-right: 1.5px solid #aab7b8; }
.t2 span { width: 181px; padding-left: 26.5px; border-right: 1.5px solid #aab7b8; letter-spacing: -.63px; }
.t3 span { padding-left: 26.5px; letter-spacing: -.5px; }
.dot { position: absolute; left: 1006px; top: 38px; width: 5px; height: 5px; border-radius: 50%; background: #ffe600; }

.rules { margin-top: 46.5px; flex: 1; min-height: 0; background: #fafafa; display: flex; flex-direction: column; border-bottom: 0; }
.rules-top { display: flex; justify-content: space-between; padding: 19px 25px 0 25px; height: 74px; flex: none; }
.rules-top h2 { line-height: 36px; }
.rules-top h2 span { font-weight: 400; color: #687078; letter-spacing: .4px; }
.btns { display: flex; gap: 10px; }
.refresh { width: 62px; }
.manage { width: 159px; letter-spacing: -.2px; }
.edit { width: 209px; }
.off { border-color: #d5dbdb; color: #aab7b8; }
.filter-row { display: flex; align-items: center; height: 41px; padding-left: 25px; flex: none; }
.filter { width: 810px; height: 40px; border: 1.5px solid #687078; border-radius: 2.5px; background: #fff; display: flex; align-items: center; padding-left: 10px; color: #687078; gap: 12px; font-style: italic; letter-spacing: -.3px; }
.pager { display: flex; align-items: center; margin-left: auto; color: #aab7b8; gap: 23px; padding-right: 16px; }
.pager b { color: #16191f; font-weight: 600; width: 12px; text-align: center; }
.flip { transform: scaleX(-1); }
.prefs { border-left: 1px solid #e3e7e7; height: 40px; width: 68px; padding: 9px 0 0 16px; color: #545b64; }
.grid { display: grid; grid-template-columns: 67px 225px repeat(4, 250px) 1fr; align-items: center; }
.grid > div { padding-left: 25px; position: relative; white-space: nowrap; }
.thead { height: 50px; margin-top: 19.5px; flex: none; border: solid #eaeded; border-width: 1px 0; font-weight: 700; color: #545b64; letter-spacing: -.5px; }
.thead > div { border-left: 1.5px solid #687078; height: 25px; line-height: 23px; display: flex; align-items: center; justify-content: space-between; padding: 0 17.5px 2px 25px; }
.thead > div:nth-child(2) { border-color: #eaeded; letter-spacing: -.8px; }
.thead > div:nth-child(3) { letter-spacing: -.3px; }
.thead svg { width: 13px; height: 12px; position: relative; top: 1.5px; }
.thead .chk { border: 0; padding-bottom: 0; }
.grid .chk { padding-left: 25px; }
.chk i { display: block; width: 18px; height: 18px; flex: none; border: 1.5px solid #687078; border-radius: 2.5px; background: #fff; }
.trow { height: 23px; overflow: hidden; background: #fff; flex: none; align-items: start; line-height: 43px; letter-spacing: .05px; }
.trow .chk { padding-top: 14.5px; }
.hbar { height: 22px; background: #f0f0f0; display: flex; align-items: center; padding: 0 8px; flex: none; }
.hbar b { width: 998px; height: 17px; background: #c1c1c1; margin-left: 8px; }
.left, .right { border: 4.5px solid transparent; border-left: 0; border-right: 5px solid #a0a0a0; }
.right { border-right: 0; border-left: 5px solid #484848; margin-left: auto; }

/* console footer */
.aws-foot { height: 37px; flex: none; background: #252f3e; border-top: 1px solid #4c5563; display: flex; align-items: center; padding: 0 20px; color: #fff; font-size: 15px; font-weight: 600; letter-spacing: -.45px; white-space: nowrap; }
.cs { margin-left: 6.5px; width: 104.5px; letter-spacing: -.35px; }
.fb { letter-spacing: -.6px; }
.copyr { margin-left: auto; width: 380.5px; letter-spacing: -.36px; }
.pr { width: 80px; }
.te { width: 72px; }
.ck { width: 129.5px; letter-spacing: -.57px; }

/* taskbar */
.taskbar { height: 60px; flex: none; background: linear-gradient(90deg, #dfe5f1, #e4e9f6 45%, #dde2ef 75%, #e6ebf8); border-top: 1px solid #b9bfcc; display: flex; align-items: center; font-size: 15px; letter-spacing: -.35px; }
.weather { width: 517px; display: flex; align-items: center; padding-left: 24px; line-height: 20px; }
.weather > svg { margin: -3px 8px 0 0; }
.wtext { padding-bottom: 4px; }
.cond { color: #555b66; }
.slot { width: 55px; height: 48px; display: grid; place-items: center; position: relative; }
.tsearch { width: 273px; height: 38px; margin: 0 3.5px 0 5px; border-radius: 19px; background: #f7f9fd; border: 1px solid #cfd5e2; border-bottom-color: #b3b9c8; display: flex; align-items: center; padding: 0 8px 0 13px; font-size: 17px; color: #5a5f69; letter-spacing: -.5px; }
.tsearch span { margin-left: 13px; }
.easter { margin-left: auto; }
.apps { display: flex; }
.run::after { content: ""; position: absolute; bottom: 0; left: 23.5px; width: 8px; height: 4px; border-radius: 2px; background: #84878d; }
.slot.on::before { content: ""; position: absolute; inset: 0 3.5px; border-radius: 5px; background: #f1f4fb; box-shadow: 0 0 1px #b5bccb; }
.slot.on > svg { position: relative; }
.slot.on::after { left: 17.5px; width: 20px; background: #ac4fc0; }
.pic { position: absolute; left: 28px; top: 3px; width: 20px; height: 20px; border-radius: 50%; background: #0d86d0; color: #cfeeff; font: 700 11px/20px "Open Sans", sans-serif; text-align: center; }
.face { background: radial-gradient(circle at 60% 45%, #6b4428 0 3.5px, #3a2718 6px, #5c4128); }
.tray { margin-left: auto; width: 420px; display: grid; grid-template-columns: 42px 38px 58px 36px 24px 36px 82px 39px 1fr; align-items: center; line-height: 20px; }
.tray > div { display: grid; place-items: center; }
.tray .lang { display: block; text-align: center; padding-bottom: 3px; }
.tray .clock { display: block; text-align: right; padding-bottom: 3px; letter-spacing: -.28px; }
.copilot { position: relative; }
.copilot svg { margin-left: -16px; }
.copilot span { position: absolute; left: 16px; bottom: -4px; background: #fcc62c; color: #2b2104; font: 700 10px/11px "Open Sans", sans-serif; padding: 0 3px; border-radius: 2px; }
```
